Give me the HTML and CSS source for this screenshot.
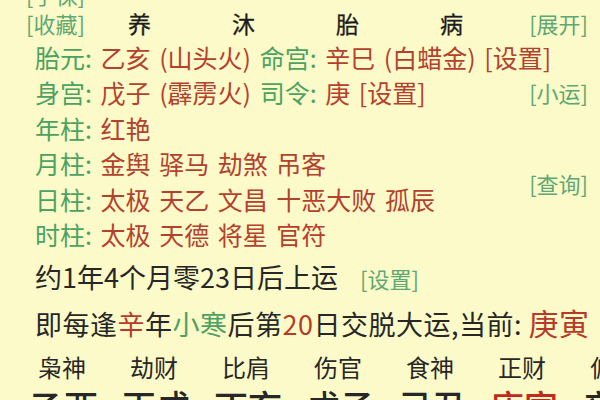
FILE: index.html
```html
<!DOCTYPE html>
<html lang="zh-CN">
<head>
<meta charset="utf-8">
<link rel="stylesheet" href="styles.css">
</head>
<body>
<div class="page">
  <div class="r0"><span class="btn">[手保]</span></div>
  <div class="r1">
    <span class="btn">[收藏]</span>
    <span class="head">养</span>
    <span class="head">沐</span>
    <span class="head">胎</span>
    <span class="head">病</span>
    <span class="btn">[展开]</span>
  </div>
  <div class="info"><span class="lbl">胎元:</span> <span class="val">乙亥 (山头火)</span> <span class="lbl">命宫:</span> <span class="val">辛巳 (白蜡金) [设置]</span></div>
  <div class="info split"><span><span class="lbl">身宫:</span> <span class="val">戊子 (霹雳火)</span> <span class="lbl">司令:</span> <span class="val">庚 [设置]</span></span><span class="btn">[小运]</span></div>
  <div class="info"><span class="lbl">年柱:</span> <span class="val">红艳</span></div>
  <div class="pair">
    <div class="col">
      <div class="info"><span class="lbl">月柱:</span> <span class="val">金舆 驿马 劫煞 吊客</span></div>
      <div class="info"><span class="lbl">日柱:</span> <span class="val">太极 天乙 文昌 十恶大败 孤辰</span></div>
    </div>
    <span class="btn">[查询]</span>
  </div>
  <div class="info"><span class="lbl">时柱:</span> <span class="val">太极 天德 将星 官符</span></div>
  <div class="r8">约1年4个月零23日后上运 <span class="btn small">[设置]</span></div>
  <div class="r9">即每逢<span class="red">辛</span>年<span class="grn">小寒</span>后第<span class="red">20</span>日交脱大运,当前: <span class="red big">庚寅</span></div>
  <div class="gods"><span>枭神</span><span>劫财</span><span>比肩</span><span>伤官</span><span>食神</span><span>正财</span><span>偏</span></div>
  <div class="pillars"><span>乙酉</span><span>丙戌</span><span>丁亥</span><span>戊子</span><span>己丑</span><span class="red">庚寅</span><span>辛</span></div>
</div>
</body>
</html>
```
FILE: styles.css
```css
html, body {
  margin: 0;
  padding: 0;
  width: 600px;
  height: 400px;
  overflow: hidden;
  background: #fcfac8;
}
.page {
  width: 600px;
  height: 400px;
  overflow: hidden;
  font-family: "Noto Sans CJK SC", "Noto Sans", sans-serif;
  color: #272727;
  font-size: 24px;
  white-space: nowrap;
  display: flex;
  flex-direction: column;
}
.btn {
  color: #5ea873;
  font-size: 22px;
  word-spacing: 0;
}
.r0 {
  margin-top: -18px;
  line-height: 24px;
  height: 24px;
  flex-shrink: 0;
  padding-left: 26px;
}
.r1 {
  display: grid;
  grid-template-columns: 102px 104px 104px 104px 1fr auto;
  padding-left: 26px;
  padding-right: 12px;
  line-height: 34px;
  height: 34px;
  flex-shrink: 0;
}
.head {
  font-size: 23px;
  color: #1c1c1c;
  -webkit-text-stroke: 0.3px #1c1c1c;
}
.info {
  line-height: 35.4px;
  height: 35.4px;
  padding-left: 35px;
  font-size: 25px;
  word-spacing: 3px;
  flex-shrink: 0;
}
.lbl {
  color: #4ba261;
}
.val {
  color: #b4412e;
}
.split {
  display: flex;
  justify-content: space-between;
  padding-right: 12px;
}
.pair {
  display: flex;
  justify-content: space-between;
  align-items: center;
  padding-right: 12px;
  flex-shrink: 0;
}
.pair .btn {
  padding-top: 2px;
}
.r8 {
  line-height: 49px;
  height: 49px;
  padding-left: 35px;
  font-size: 27px;
  flex-shrink: 0;
}
.r8 .small {
  margin-left: 16px;
}
.r9 {
  line-height: 43px;
  height: 43px;
  padding-left: 35px;
  font-size: 27px;
  letter-spacing: 0.5px;
  flex-shrink: 0;
}
.red {
  color: #b63a28;
}
.grn {
  color: #4ba261;
}
.big {
  font-size: 30px;
}
.gods {
  display: grid;
  grid-template-columns: repeat(7, 92px);
  padding-left: 38px;
  line-height: 45px;
  height: 45px;
  font-size: 24px;
  flex-shrink: 0;
}
.pillars {
  display: grid;
  grid-template-columns: repeat(7, 92px);
  padding-left: 30px;
  line-height: 34px;
  height: 34px;
  font-size: 34px;
  font-weight: 500;
  flex-shrink: 0;
}
.pillars .red {
  color: #c02a1c;
}
```
